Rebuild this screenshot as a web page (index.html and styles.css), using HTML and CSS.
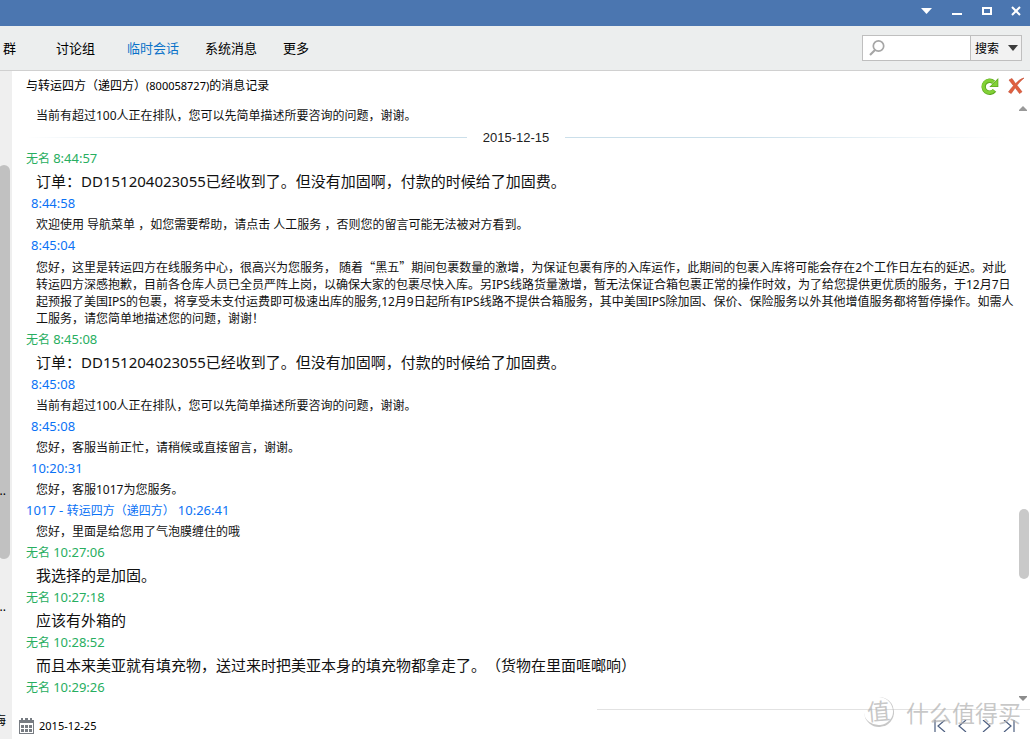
FILE: index.html
```html
<!DOCTYPE html>
<html lang="zh-CN">
<head>
<meta charset="utf-8">
<title>消息记录</title>
<link rel="stylesheet" href="styles.css">
</head>
<body>
<div class="window">
  <header class="titlebar">
    <button class="win-btn" aria-label="菜单"><svg width="12" height="12" viewBox="0 0 12 12"><path d="M1 3h11L6.500 9z" fill="#fff"/></svg></button>
    <button class="win-btn" aria-label="最小化"><svg width="12" height="12" viewBox="0 0 12 12"><path d="M2 8h10v2H2z" fill="#fff"/></svg></button>
    <button class="win-btn" aria-label="最大化"><svg width="12" height="12" viewBox="0 0 12 12"><path d="M3 3h8v6H3z" fill="none" stroke="#fff" stroke-width="2"/></svg></button>
    <button class="win-btn" aria-label="关闭"><svg width="12" height="12" viewBox="0 0 12 12"><path d="M2 2l8 8M10 2l-8 8" stroke="#fff" stroke-width="2"/></svg></button>
  </header>

  <div class="toolbar">
    <nav class="tabs">
      <button class="tab tab-group">群</button>
      <button class="tab tab-discuss">讨论组</button>
      <button class="tab tab-active">临时会话</button>
      <button class="tab">系统消息</button>
      <button class="tab">更多</button>
    </nav>
    <form class="search">
      <label class="search-box">
        <svg width="18" height="18" viewBox="0 0 18 18" fill="none" stroke="#a6a6a6"><circle cx="9.500" cy="7" r="5.200" stroke-width="1.700"/><path d="M6 11l-5 5" stroke-width="2.200"/></svg>
        <input class="search-input" type="text" aria-label="搜索内容">
      </label>
      <button class="search-btn" type="button">搜索<svg width="10" height="6" viewBox="0 0 10 6"><path d="M0 0h10L5 6z" fill="#3c3c3c"/></svg></button>
    </form>
  </div>

  <div class="body">
    <aside class="sidebar">
      <div class="side-thumb"></div>
      <span class="side-text side-first">..</span>
      <span class="side-text side-second">..</span>
      <span class="side-text side-third">海</span>
    </aside>

    <main class="content">
      <div class="heading">
        <h1 class="heading-title">与转运四方（递四方）<span class="num">(800058727)</span>的消息记录</h1>
        <button class="icon-btn" aria-label="刷新"><svg width="18" height="18" viewBox="0 0 18 18"><path d="M13.500 13.400A6 6 0 1 1 12.600 5.200" fill="none" stroke="#5ea922" stroke-width="4.400"/><path d="M17.300 1v9H8.300z" fill="#5ea922"/><path d="M12.800 13.400A6 6 0 1 1 12.600 5.200" fill="none" stroke="#82d136" stroke-width="3"/><path d="M16.500 2.800v6.500H10z" fill="#82d136"/></svg></button>
        <button class="icon-btn" aria-label="删除"><svg width="18" height="18" viewBox="0 0 18 18"><path d="M2 3l3-1.500 3.600 5.200C11 4 13.500 1.800 17 1c-2.700 2.300-5 4.500-7 7.300l5 6.500-2.500 1.700-4.300-5.700c-1.400 2-2.600 3.800-4 5.700L1.500 15c1.500-2.300 3.200-4.200 5-6.300z" fill="#e0603f" stroke="#c34a30" stroke-width=".6"/></svg></button>
      </div>

      <div class="history">
        <div class="log">
          <p class="msg">当前有超过100人正在排队，您可以先简单描述所要咨询的问题，谢谢。</p>
          <div class="day"><span class="day-text">2015-12-15</span></div>

          <h2 class="who me">无名 <time>8:44:57</time></h2>
          <p class="msg big">订单：DD151204023055已经收到了。但没有加固啊，付款的时候给了加固费。</p>

          <h2 class="who agent unnamed"><time>8:44:58</time></h2>
          <p class="msg">欢迎使用 导航菜单 ，如您需要帮助，请点击 人工服务 ，否则您的留言可能无法被对方看到。</p>

          <h2 class="who agent unnamed"><time>8:45:04</time></h2>
          <p class="msg">您好，这里是转运四方在线服务中心，很高兴为您服务， 随着<span class="cjk">“</span>黑五<span class="cjk">”</span>期间包裹数量的激增，为保证包裹有序的入库运作，此期间的包裹入库将可能会存在2个工作日左右的延迟。对此转运四方深感抱歉，目前各仓库人员已全员严阵上岗，以确保大家的包裹尽快入库。另IPS线路货量激增，暂无法保证合箱包裹正常的操作时效，为了给您提供更优质的服务，于12月7日起预报了美国IPS的包裹，将享受未支付运费即可极速出库的服务,12月9日起所有IPS线路不提供合箱服务，其中美国IPS除加固、保价、保险服务以外其他增值服务都将暂停操作。如需人工服务，请您简单地描述您的问题，谢谢！</p>

          <h2 class="who me">无名 <time>8:45:08</time></h2>
          <p class="msg big">订单：DD151204023055已经收到了。但没有加固啊，付款的时候给了加固费。</p>

          <h2 class="who agent unnamed"><time>8:45:08</time></h2>
          <p class="msg">当前有超过100人正在排队，您可以先简单描述所要咨询的问题，谢谢。</p>

          <h2 class="who agent unnamed"><time>8:45:08</time></h2>
          <p class="msg">您好，客服当前正忙，请稍候或直接留言，谢谢。</p>

          <h2 class="who agent unnamed"><time>10:20:31</time></h2>
          <p class="msg">您好，客服1017为您服务。</p>

          <h2 class="who agent"><span class="id">1017 - </span>转运四方（递四方） <time>10:26:41</time></h2>
          <p class="msg">您好，里面是给您用了气泡膜缠住的哦</p>

          <h2 class="who me">无名 <time>10:27:06</time></h2>
          <p class="msg big">我选择的是加固。</p>

          <h2 class="who me">无名 <time>10:27:18</time></h2>
          <p class="msg big">应该有外箱的</p>

          <h2 class="who me">无名 <time>10:28:52</time></h2>
          <p class="msg big">而且本来美亚就有填充物，送过来时把美亚本身的填充物都拿走了。（货物在里面哐啷响）</p>

          <h2 class="who me">无名 <time>10:29:26</time></h2>
        </div>
        <div class="scroll">
          <svg width="8" height="5" viewBox="0 0 8 5"><path d="M4 0l4 4v1H0V4z" fill="#999"/></svg>
          <div class="track"><div class="thumb"></div></div>
          <svg width="8" height="5" viewBox="0 0 8 5"><path d="M4 5l4-4V0H0v1z" fill="#8c8c8c"/></svg>
        </div>
      </div>

      <footer class="footer">
        <button class="date-btn"><svg width="15" height="16" viewBox="0 0 15 16"><path d="M0 2h15v14H0z" fill="#777c82"/><path d="M2 0h2v3H2zM6 0h3v3H6zM11 0h2v3h-2z" fill="#777c82"/><path d="M1 5h13v10H1z" fill="#fff"/><path d="M2 7h3v3H2zM6 7h3v3H6zM10 7h3v3h-3zM2 11h3v3H2zM6 11h3v3H6zM10 11h3v3h-3z" fill="#777c82"/></svg><span class="num">2015-12-25</span></button>
        <div class="pager">
          <button class="page-btn" aria-label="第一页"><svg width="14" height="12" viewBox="0 0 14 12"><path d="M2 0v12M12 0L5 6l7 6"/></svg></button>
          <button class="page-btn" aria-label="上一页"><svg width="14" height="12" viewBox="0 0 14 12"><path d="M10 0L3 6l7 6"/></svg></button>
          <button class="page-btn" aria-label="下一页"><svg width="14" height="12" viewBox="0 0 14 12"><path d="M4 0l7 6-7 6"/></svg></button>
          <button class="page-btn" aria-label="最后一页"><svg width="14" height="12" viewBox="0 0 14 12"><path d="M12 0v12M2 0l7 6-7 6"/></svg></button>
        </div>
      </footer>
    </main>
  </div>

  <div class="watermark"><span class="seal">值</span><span>什么值得买</span></div>
</div>
</body>
</html>
```
FILE: styles.css
```css
* { box-sizing: border-box; }

body {
  margin: 0;
  font-family: "Noto Sans", "Noto Sans CJK SC", sans-serif;
  font-size: 12px;
  text-spacing-trim: space-all;
  color: #000;
  background: #fff;
}

button, input {
  font: inherit;
  color: inherit;
  padding: 0;
  border: 0;
  background: none;
}

svg { display: block; flex: none; }
h1, h2, p { margin: 0; font-weight: normal; }

.window {
  position: relative;
  display: flex;
  flex-direction: column;
  height: 100vh;
  overflow: hidden;
}

.titlebar {
  flex: none;
  display: flex;
  justify-content: flex-end;
  gap: 18px;
  height: 26px;
  padding: 5px 8px 0 0;
  background: #4b76b0;
}
.win-btn { height: 12px; }

.toolbar {
  flex: none;
  display: flex;
  align-items: center;
  justify-content: space-between;
  height: 45px;
  padding: 0 8px 0 3px;
  background: #eceeee;
  border-bottom: 1px solid #d0d0d0;
}
.tabs { display: flex; gap: 26px; font-size: 13px; line-height: 20px; }
.tab-group { margin-right: 14px; }
.tab-discuss { margin-right: 6px; }
.tab-active { color: #0b72c9; }

.search {
  display: flex;
  width: 160px;
  height: 26px;
  border: 1px solid #bfbfbf;
}
.search-box {
  flex: 1;
  min-width: 0;
  display: flex;
  align-items: center;
  padding-left: 6px;
  background: #fff;
}
.search-input { flex: 1; min-width: 0; width: 0; height: 24px; outline: 0; }
.search-btn {
  flex: none;
  display: flex;
  align-items: center;
  gap: 9px;
  padding: 0 3px 0 4px;
  border-left: 1px solid #bfbfbf;
  background: #f2f2f2;
}

.body { flex: 1; display: flex; min-height: 0; }

.sidebar {
  position: relative;
  flex: none;
  width: 12px;
  background: #efefef;
  overflow: hidden;
}
.side-thumb {
  position: absolute;
  left: -2px;
  top: 14%;
  width: 12px;
  height: 59%;
  border-radius: 6px;
  background: #c1c1c1;
}
.side-text { position: absolute; right: 6px; line-height: 18px; }
.side-first { top: 411px; }
.side-second { top: 527px; }
.side-third { top: 641px; }

.content {
  flex: 1;
  min-width: 0;
  display: flex;
  flex-direction: column;
}

.heading {
  flex: none;
  display: flex;
  align-items: center;
  gap: 8px;
  height: 30px;
  padding: 0 5px 0 14px;
}
.heading-title { flex: 1; font-size: 12px; line-height: 18px; }
.num { font-size: 11px; }

.history { flex: 1; display: flex; min-height: 0; }
.log {
  flex: 1;
  min-width: 0;
  padding: 2px 0 0 14px;
  overflow: hidden;
}

.msg {
  padding: 4px 0 3px 10px;
  line-height: 17px;
  color: #111;
}
.big { font-size: 15px; line-height: 20px; }
.cjk { font-family: "Noto Sans CJK SC", sans-serif; }

.who { font-size: 12px; line-height: 18px; height: 18px; }
.who time, .id { font-size: 13px; }
.me { color: #27ae60; }
.agent { color: #0b72f5; }
.unnamed { padding-left: 5px; }

.day {
  display: flex;
  align-items: center;
  gap: 16px;
  height: 22px;
  margin-right: 10px;
  padding-bottom: 2px;
  font-family: "Liberation Sans", sans-serif;
  font-size: 13px;
  color: #222;
}
.day::before, .day::after { content: ""; flex: 1; height: 1px; }
.day::before { background: linear-gradient(to right, #fff, #cbdfea 40%); }
.day::after { background: linear-gradient(to left, #fff, #cbdfea 60%); }

.scroll {
  flex: none;
  display: flex;
  flex-direction: column;
  align-items: center;
  width: 14px;
  padding: 5px 0 8px;
}
.track { position: relative; flex: 1; width: 10px; }
.thumb {
  position: absolute;
  top: 68%;
  left: 1px;
  width: 10px;
  height: 12%;
  border-radius: 5px;
  background: #c9c9c9;
}

.footer {
  flex: none;
  display: flex;
  align-items: center;
  justify-content: space-between;
  height: 30px;
  padding: 3px 14px 0 7px;
  background: linear-gradient(#e2e2e2, #e2e2e2) 100% 0 / 433px 1px no-repeat;
}
.date-btn { display: flex; align-items: center; gap: 5px; }
.pager { display: flex; gap: 9px; }
.page-btn svg { fill: none; stroke: #4d5f80; stroke-width: 1.2; }

.watermark {
  position: absolute;
  right: 9px;
  bottom: 10px;
  display: flex;
  align-items: center;
  gap: 12px;
  font-family: "Noto Sans CJK SC", sans-serif;
  font-size: 23px;
  line-height: 34px;
  color: rgba(175, 175, 175, 0.7);
  pointer-events: none;
}
.seal {
  width: 30px;
  height: 30px;
  border-bottom: 2px solid;
  border-right: 1px solid;
  border-radius: 50%;
  line-height: 26px;
  text-align: center;
  transform: rotate(-5deg);
}
```
